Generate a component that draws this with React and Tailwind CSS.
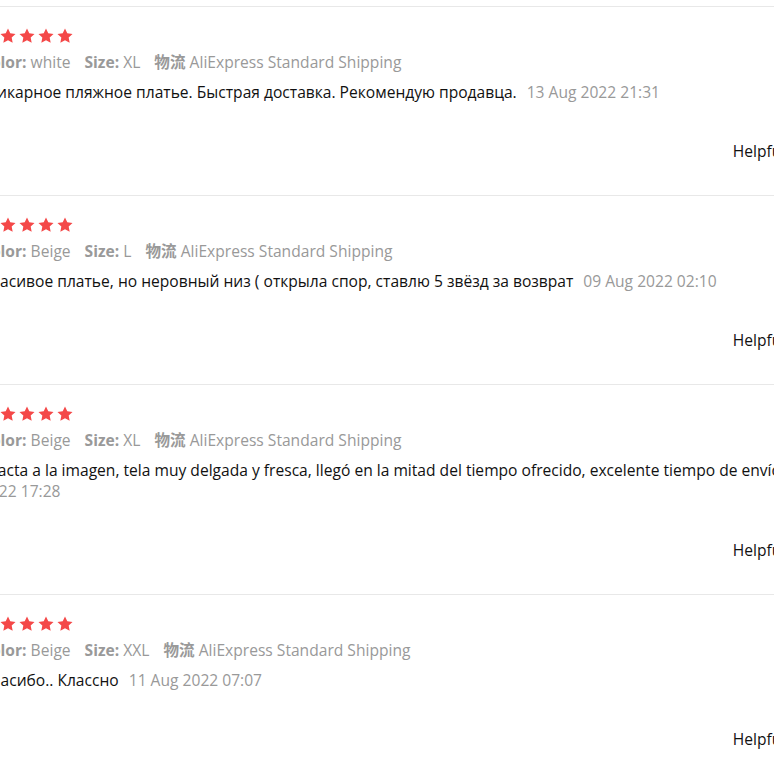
import React from 'react'

const reviews = [
  {
    color: 'white',
    size: 'XL',
    text: 'Шикарное пляжное платье. Быстрая доставка. Рекомендую продавца.',
    date: '13 Aug 2022 21:31',
  },
  {
    color: 'Beige',
    size: 'L',
    text: 'Красивое платье, но неровный низ ( открыла спор, ставлю 5 звёзд за возврат',
    date: '09 Aug 2022 02:10',
  },
  {
    color: 'Beige',
    size: 'XL',
    text: 'Exacta a la imagen, tela muy delgada y fresca, llegó en la mitad del tiempo ofrecido, excelente tiempo de envío',
    date: '12 Aug 2022 17:28',
  },
  {
    color: 'Beige',
    size: 'XXL',
    text: 'Спасибо.. Классно',
    date: '11 Aug 2022 07:07',
  },
]

function Star() {
  return (
    <svg viewBox="0 0 24 24" className="w-[16px] h-[16px]" fill="#f44848">
      <path d="M12 0.8l3.4 7.2 7.9 1-5.8 5.4 1.5 7.9L12 18.4l-7 3.9 1.5-7.9L0.7 9l7.9-1z" />
    </svg>
  )
}

function Review({ r }) {
  return (
    <div className="border-t border-[#e8e8e8] pt-[21px] pb-[33px]">
      {/* Stars */}
      <div className="flex gap-[3px] h-[16px]">
        {[0, 1, 2, 3, 4].map((i) => (
          <Star key={i} />
        ))}
      </div>

      <div className="mt-[8px] flex gap-x-[14px] leading-[21px] text-[#999]">
        <span>
          <span className="font-bold">Color:</span> {r.color}
        </span>
        <span>
          <span className="font-bold">Size:</span> {r.size}
        </span>
        <span>
          <span className="font-bold">物流</span> AliExpress Standard Shipping
        </span>
      </div>

      <div className="mt-[9px] leading-[21px] text-[#111]">
        {r.text}
        <span className="ml-[10px] text-[#999]">{r.date}</span>
      </div>

      <div className="mt-[38px] flex justify-end leading-[21px] text-[#111]">
        <span>Helpful?</span>
        <span className="ml-[21px] text-[#666]">Yes (0)</span>
      </div>
    </div>
  )
}

export default function App() {
  return (
    <div className="w-[774px] h-[774px] overflow-hidden bg-white font-['Open_Sans','Noto_Sans_CJK_SC',sans-serif] text-[15.6px]">
      <div className="ml-[-19px] w-[879px] pt-[6px]">
        {reviews.map((r, idx) => (
          <Review key={idx} r={r} />
        ))}
      </div>
    </div>
  )
}
